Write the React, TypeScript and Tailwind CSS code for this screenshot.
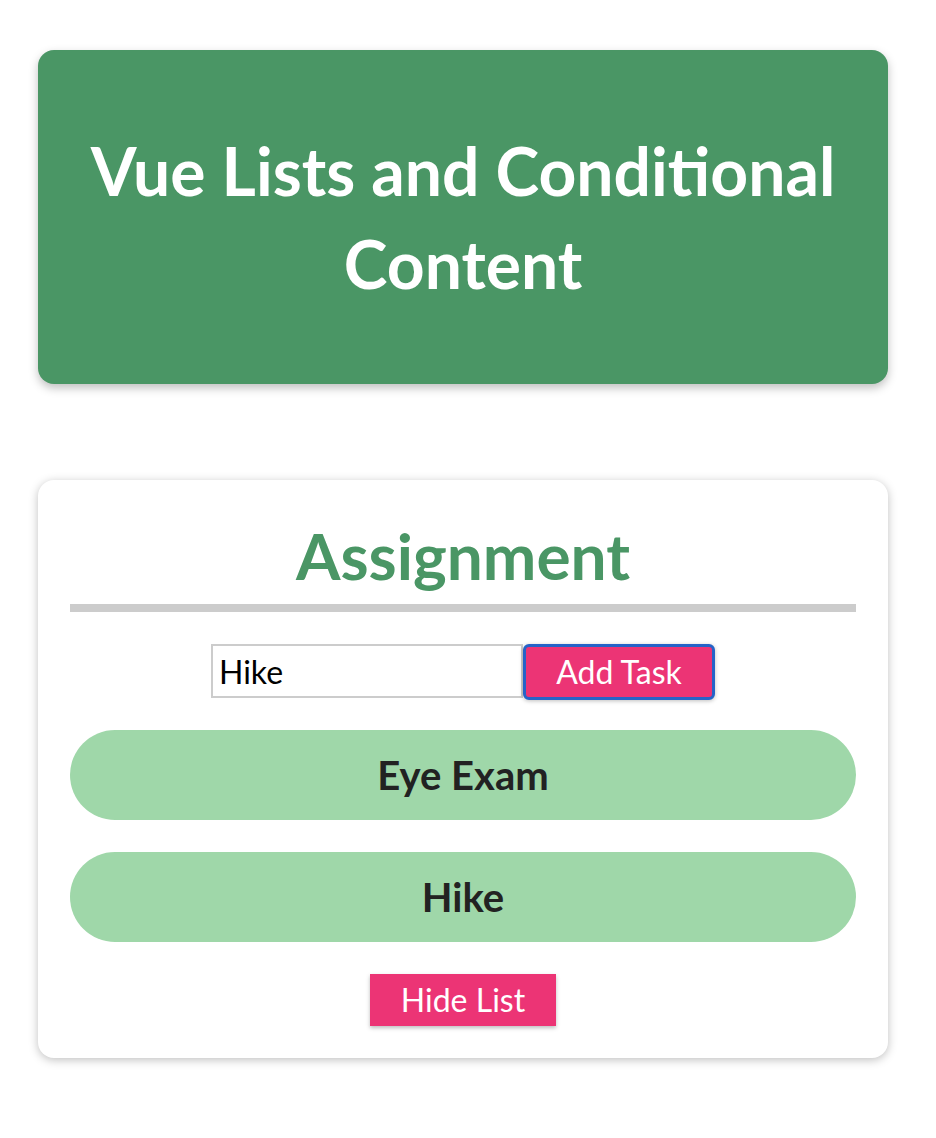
import React from "react";

export default function App() {
  const font = { fontFamily: '"Lato", "Noto Sans", sans-serif' };
  return (
    <div className="min-h-[1138px] w-full bg-white pt-[50px]" style={font}>
      <header className="ml-[38px] w-[850px] rounded-[16px] bg-[#4a9665] py-[74px] px-8 text-center text-white shadow-[0_4px_10px_rgba(0,0,0,0.25)]">
        <h1 className="text-[66px] font-bold leading-[93px]">Vue Lists and Conditional Content</h1>
      </header>
      <section className="ml-[38px] mt-[96px] w-[850px] rounded-[16px] bg-white px-[32px] pt-[44px] pb-[32px] shadow-[0_2px_10px_rgba(0,0,0,0.25)]">
        <h2 className="text-center text-[64px] font-bold leading-[64px] text-[#4a9665]">Assignment</h2>
        <div className="mt-[16px] h-[8px] bg-[#cccccc]" />
        <div className="mt-[32px] flex justify-center">
          <input
            defaultValue="Hike"
            className="h-[54px] w-[312px] border-2 border-[#cccccc] px-[6px] text-[32px] text-black outline-none"
            style={font}
          />
          <button
            className="h-[56px] w-[192px] rounded-[6px] border-[3px] border-[#2563c8] bg-[#ec3475] text-[32px] text-white shadow-[0_1px_4px_rgba(0,0,0,0.26)]"
            style={font}
          >
            Add Task
          </button>
        </div>
        <ul className="mt-[30px] flex flex-col gap-[32px]">
          <li className="flex h-[90px] items-center justify-center rounded-full bg-[#9fd7a9] text-[40px] font-bold text-[#222222]">Eye Exam</li>
          <li className="flex h-[90px] items-center justify-center rounded-full bg-[#9fd7a9] text-[40px] font-bold text-[#222222]">Hike</li>
        </ul>
        <div className="mt-[32px] flex justify-center">
          <button
            className="h-[52px] w-[186px] bg-[#ec3475] text-[32px] text-white shadow-[0_2px_4px_rgba(0,0,0,0.26)]"
            style={font}
          >
            Hide List
          </button>
        </div>
      </section>
    </div>
  );
}
